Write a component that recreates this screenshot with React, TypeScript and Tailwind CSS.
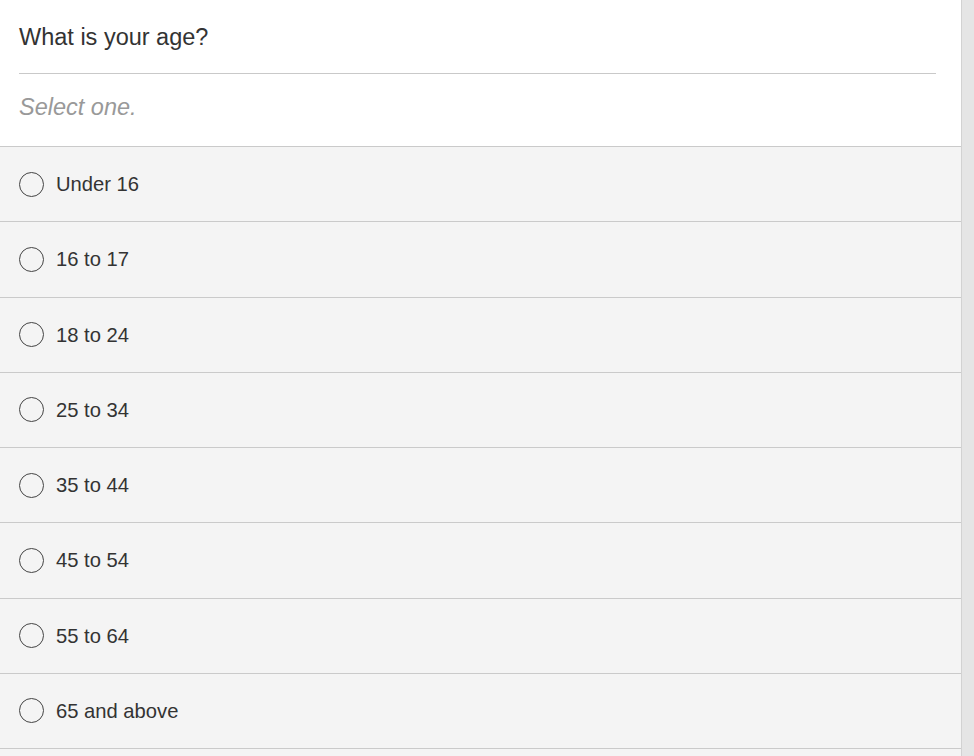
import React from "react";

const options = [
  "Under 16",
  "16 to 17",
  "18 to 24",
  "25 to 34",
  "35 to 44",
  "45 to 54",
  "55 to 64",
  "65 and above",
];

export default function App() {
  return (
    <div
      className="flex h-[756px] w-[974px] overflow-hidden bg-white"
      style={{ fontFamily: '"Liberation Sans", Arial, sans-serif' }}
    >
      <div className="flex w-[961px] flex-col bg-white">
        <div className="pl-[19px] pr-[25px] pt-[23px]">
          <div className="text-[23.5px] leading-[28px] text-[#333]">What is your age?</div>
          <div className="mt-[22px] h-px bg-[#c9c9c9]" />
          <div className="mt-[19px] text-[23.5px] italic leading-[28px] text-[#999]">Select one.</div>
        </div>
        <div className="mt-[25px] border-b border-[#cacaca] bg-[#f4f4f4]">
          {options.map((o) => (
            <label
              key={o}
              className="flex h-[75.25px] items-center border-t border-[#cacaca] pl-[19px]"
            >
              <span className="h-[25px] w-[25px] shrink-0 rounded-full border-[1.5px] border-[#444]" />
              <span className="ml-[12px] text-[20.2px] leading-[24px] text-[#333]">{o}</span>
            </label>
          ))}
        </div>
        <div className="flex-1 bg-[#f4f4f4]" />
      </div>
      <div className="w-[13px] border-l border-[#d2d2d2] bg-[#e5e5e5]" />
    </div>
  );
}
